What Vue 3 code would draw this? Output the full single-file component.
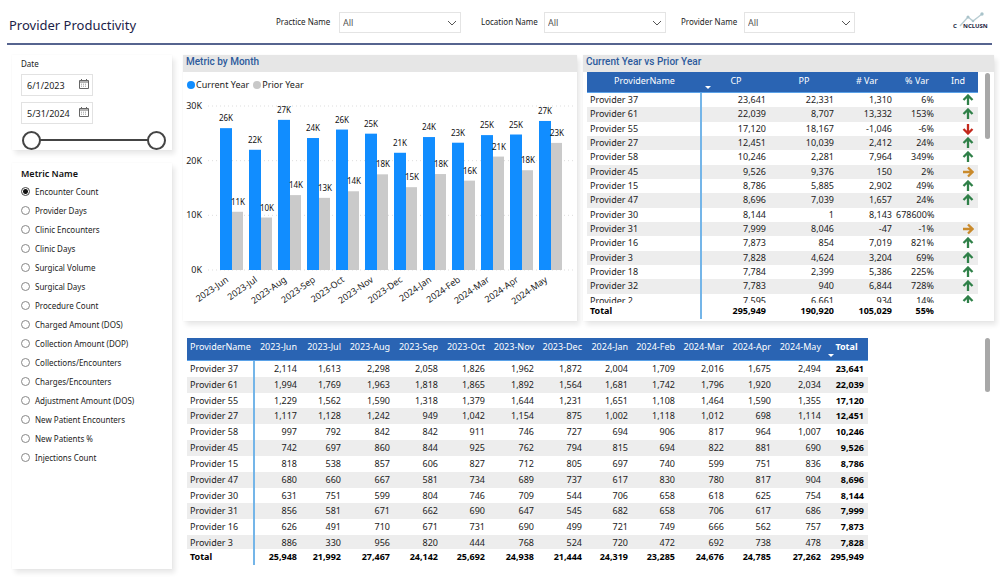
<script setup>
import { ref } from 'vue'

const filters = ['Practice Name', 'Location Name', 'Provider Name']
const startDate = ref('6/1/2023')
const endDate = ref('5/31/2024')
const rangeStart = ref(0)
const rangeEnd = ref(100)

const metrics = [
  'Encounter Count', 'Provider Days', 'Clinic Encounters', 'Clinic Days', 'Surgical Volume',
  'Surgical Days', 'Procedure Count', 'Charged Amount (DOS)', 'Collection Amount (DOP)',
  'Collections/Encounters', 'Charges/Encounters', 'Adjustment Amount (DOS)',
  'New Patient Encounters', 'New Patients %', 'Injections Count'
]
const metric = ref('Encounter Count')

const months = [
  '2023-Jun', '2023-Jul', '2023-Aug', '2023-Sep', '2023-Oct', '2023-Nov',
  '2023-Dec', '2024-Jan', '2024-Feb', '2024-Mar', '2024-Apr', '2024-May'
]
const current = [25948, 21992, 27467, 24142, 25692, 24938, 21444, 24319, 23285, 24676, 24785, 27262]
const prior = [10650, 9600, 13700, 13200, 14400, 17500, 15150, 17550, 16350, 20750, 18250, 23250]
const priorLabels = ['11K', '10K', '14K', '13K', '14K', '18K', '15K', '18K', '16K', '21K', '18K', '23K']

const base = 175
const scale = v => (v * 164) / 30000
const bars = months.map((m, i) => ({
  month: m,
  x: 37 + i * 29,
  cur: scale(current[i]),
  pri: scale(prior[i]),
  curLabel: Math.round(current[i] / 1000) + 'K',
  priLabel: priorLabels[i]
}))
const ticks = [30, 20, 10, 0].map(t => ({ label: t + 'K', y: base - scale(t * 1000) }))

const arrows = {
  up: 'M6 11V2M1.5 6L6 1.5L10.5 6',
  down: 'M6 1V10M1.5 6L6 10.5L10.5 6',
  right: 'M1 6H10M6 1.5L10.5 6L6 10.5'
}
const compare = [
  ['Provider 37', '23,641', '22,331', '1,310', '6%', 'up'],
  ['Provider 61', '22,039', '8,707', '13,332', '153%', 'up'],
  ['Provider 55', '17,120', '18,167', '-1,046', '-6%', 'down'],
  ['Provider 27', '12,451', '10,039', '2,412', '24%', 'up'],
  ['Provider 58', '10,246', '2,281', '7,964', '349%', 'up'],
  ['Provider 45', '9,526', '9,376', '150', '2%', 'right'],
  ['Provider 15', '8,786', '5,885', '2,902', '49%', 'up'],
  ['Provider 47', '8,696', '7,039', '1,657', '24%', 'up'],
  ['Provider 30', '8,144', '1', '8,143', '678600%', ''],
  ['Provider 31', '7,999', '8,046', '-47', '-1%', 'right'],
  ['Provider 16', '7,873', '854', '7,019', '821%', 'up'],
  ['Provider 3', '7,828', '4,624', '3,204', '69%', 'up'],
  ['Provider 18', '7,784', '2,399', '5,386', '225%', 'up'],
  ['Provider 32', '7,783', '940', '6,844', '728%', 'up'],
  ['Provider 2', '7,595', '6,661', '934', '14%', 'up']
]

const monthly = [
  ['Provider 37', 2114, 1613, 2298, 2058, 1826, 1962, 1872, 2004, 1709, 2016, 1675, 2494, 23641],
  ['Provider 61', 1994, 1769, 1963, 1818, 1865, 1892, 1564, 1681, 1742, 1796, 1920, 2034, 22039],
  ['Provider 55', 1229, 1562, 1590, 1318, 1379, 1644, 1231, 1651, 1108, 1464, 1590, 1355, 17120],
  ['Provider 27', 1117, 1128, 1242, 949, 1042, 1154, 875, 1002, 1118, 1012, 698, 1114, 12451],
  ['Provider 58', 997, 792, 842, 842, 911, 746, 727, 694, 906, 817, 964, 1007, 10246],
  ['Provider 45', 742, 697, 860, 844, 925, 762, 794, 815, 694, 822, 881, 690, 9526],
  ['Provider 15', 818, 538, 857, 606, 827, 712, 805, 697, 740, 599, 751, 836, 8786],
  ['Provider 47', 680, 660, 667, 581, 734, 689, 737, 617, 830, 780, 817, 904, 8696],
  ['Provider 30', 631, 751, 599, 804, 746, 709, 544, 706, 658, 618, 625, 754, 8144],
  ['Provider 31', 856, 581, 671, 662, 690, 647, 545, 682, 658, 706, 617, 686, 7999],
  ['Provider 16', 626, 491, 710, 671, 731, 690, 499, 721, 749, 666, 562, 757, 7873],
  ['Provider 3', 886, 330, 956, 820, 444, 768, 524, 720, 472, 692, 738, 478, 7828]
]
const fmt = n => n.toLocaleString('en-US')
const monthWidths = [46, 44, 49, 48, 47, 49, 48, 46, 47, 49, 47, 50]
</script>

<template>
  <div class="page">
    <header class="top">
      <h1>Provider Productivity</h1>
      <div class="filters">
        <div v-for="(f, i) in filters" :key="f" class="field">
          <label :for="'filter' + i">{{ f }}</label>
          <div class="drop">
            <select :id="'filter' + i"><option>All</option></select>
            <svg viewBox="0 0 10 6" aria-hidden="true"><path d="M1 1L5 5L9 1" /></svg>
          </div>
        </div>
      </div>
      <svg class="logo" viewBox="0 0 38 18" role="img" aria-label="Conclusn">
        <polyline points="8,14 16,5 21,9 30,2" />
        <circle cx="16" cy="5" r="1.5" /><circle cx="21" cy="9" r="1.3" /><circle cx="30" cy="2" r="1.7" />
        <text x="1" y="16">C</text>
        <text x="11" y="16">NCLUSN</text>
      </svg>
    </header>

    <main class="body">
      <aside class="side">
        <section class="card dates">
          <div class="cap">Date</div>
          <div class="date">
            <input v-model="startDate" type="text" aria-label="Start date">
            <svg viewBox="0 0 10 10" aria-hidden="true"><path d="M.5 1.5h9v8h-9zM.5 3h9M2.5 0v2M7.5 0v2" /><path class="dots" d="M2 5.2h6M2 7.2h6" /></svg>
          </div>
          <div class="date">
            <input v-model="endDate" type="text" aria-label="End date">
            <svg viewBox="0 0 10 10" aria-hidden="true"><path d="M.5 1.5h9v8h-9zM.5 3h9M2.5 0v2M7.5 0v2" /><path class="dots" d="M2 5.2h6M2 7.2h6" /></svg>
          </div>
          <div class="range">
            <input v-model="rangeStart" type="range" min="0" max="100" aria-label="Range start">
            <input v-model="rangeEnd" type="range" min="0" max="100" aria-label="Range end">
          </div>
        </section>

        <section class="card metrics">
          <h2>Metric Name</h2>
          <label v-for="m in metrics" :key="m">
            <input v-model="metric" type="radio" name="metric" :value="m">{{ m }}
          </label>
        </section>
      </aside>

      <div class="content">
        <div class="upper">
          <section class="card chart">
            <h2 class="bar">Metric by Month</h2>
            <div class="legend">
              <i class="dot blue"></i>Current Year<i class="dot gray"></i>Prior Year
            </div>
            <svg class="plot" viewBox="0 0 394 226" role="img" aria-label="Metric by Month">
              <g v-for="t in ticks" :key="t.label">
                <line class="grid" x1="25" x2="392" :y1="t.y" :y2="t.y" />
                <text class="tick" x="19" :y="t.y + 3">{{ t.label }}</text>
              </g>
              <g v-for="b in bars" :key="b.month">
                <rect class="cur" :x="b.x" :y="base - b.cur" width="12" :height="b.cur" />
                <rect class="pri" :x="b.x + 12" :y="base - b.pri" width="11" :height="b.pri" />
                <text class="axis" :transform="`translate(${b.x + 9} 186) rotate(-35)`">{{ b.month }}</text>
              </g>
              <g v-for="b in bars" :key="b.month">
                <text class="val" :x="b.x + 6" :y="base - b.cur - 7">{{ b.curLabel }}</text>
                <text class="val" :x="b.x + 18" :y="base - b.pri - 7">{{ b.priLabel }}</text>
              </g>
            </svg>
          </section>

          <section class="card versus">
            <h2 class="bar">Current Year vs Prior Year</h2>
            <div class="versus-body">
              <div class="scroll s1">
                <table class="t1">
                  <colgroup><col class="c1"><col class="c2"><col class="c2"><col class="c3"><col class="c4"><col class="c5"></colgroup>
                  <thead>
                    <tr><th>ProviderName</th><th class="sorted">CP</th><th>PP</th><th># Var</th><th>% Var</th><th>Ind</th></tr>
                  </thead>
                  <tbody>
                    <tr v-for="r in compare" :key="r[0]">
                      <td v-for="c in 5" :key="c">{{ r[c - 1] }}</td>
                      <td><svg v-if="r[5]" :class="['ind', r[5]]" viewBox="0 0 12 12" role="img" :aria-label="r[5]"><path :d="arrows[r[5]]" /></svg></td>
                    </tr>
                  </tbody>
                  <tfoot>
                    <tr><td>Total</td><td>295,949</td><td>190,920</td><td>105,029</td><td>55%</td><td></td></tr>
                  </tfoot>
                </table>
              </div>
              <div class="thumb long"></div>
            </div>
          </section>
        </div>

        <section class="lower">
          <div class="scroll s2">
            <table class="t2">
              <colgroup>
                <col style="width: 68px"><col v-for="(w, i) in monthWidths" :key="i" :style="{ width: w + 'px' }"><col style="width: 43px">
              </colgroup>
              <thead>
                <tr><th>ProviderName</th><th v-for="m in months" :key="m">{{ m }}</th><th class="sorted">Total</th></tr>
              </thead>
              <tbody>
                <tr v-for="r in monthly" :key="r[0]">
                  <td>{{ r[0] }}</td>
                  <td v-for="c in 13" :key="c">{{ fmt(r[c]) }}</td>
                </tr>
              </tbody>
              <tfoot>
                <tr><td>Total</td><td v-for="(v, i) in current" :key="i">{{ fmt(v) }}</td><td>295,949</td></tr>
              </tfoot>
            </table>
          </div>
          <div class="thumb"></div>
        </section>
      </div>
    </main>
  </div>
</template>

<style>
body { background: #fff; }
</style>

<style scoped>
.page {
  font-family: "Noto Sans", "Open Sans", sans-serif;
  font-size: 9px;
  line-height: 14px;
  color: #1c1c1c;
  background: #fff;
}
.page *, .page *::before, .page *::after { box-sizing: border-box; }
h1, h2 { margin: 0; font-weight: 400; }
input, select { font: inherit; color: inherit; margin: 0; }

.top {
  display: flex;
  height: 45px;
  margin: 0 8px 0 7px;
  padding-left: 2px;
  border-bottom: 2px solid #56648f;
}
h1 { width: 267px; padding-top: 15px; font-size: 13px; line-height: 20px; color: #1b2248; }
.filters { display: flex; padding-top: 12px; }
.field { display: flex; height: 21px; }
.field + .field { margin-left: 20px; }
.field:last-child { margin-left: 15px; }
.field label { width: 63px; line-height: 20px; font-size: 8px; white-space: nowrap; }
.drop { position: relative; width: 122px; }
.field:last-child .drop { width: 111px; }
select {
  width: 100%;
  height: 21px;
  padding: 1px 3px 0;
  border: 1px solid #e4e4e4;
  border-radius: 0;
  background: #fff;
  color: #555;
  appearance: none;
}
.drop svg { position: absolute; right: 4px; top: 8px; width: 10px; height: 6px; pointer-events: none; }
.drop path { fill: none; stroke: #555; }
.logo { width: 38px; height: 18px; margin: 12px 2px 0 auto; }
.logo polyline { fill: none; stroke: #b9cdd3; stroke-width: 1.4; }
.logo circle { fill: #a9c3ca; }
.logo text { font-size: 6px; font-weight: 700; fill: #1b2440; }

.body { display: flex; gap: 11px; padding: 10px 6px 10px 12px; }
.side { flex: none; width: 160px; display: flex; flex-direction: column; gap: 13px; }
.card { background: #fff; box-shadow: 3px 4px 5px rgba(0, 0, 0, 0.09), 0 0 2px rgba(0, 0, 0, 0.04); }
.dates { height: 95px; padding: 1px 6px 0 9px; overflow: hidden; }
.cap { font-size: 8px; line-height: 16px; margin-bottom: 2px; }
.date {
  display: flex;
  align-items: center;
  width: 72px;
  height: 22px;
  margin-bottom: 6px;
  padding: 0 3px 0 5px;
  border: 1px solid #e2e2e2;
}
.date input { flex: 1; min-width: 0; padding: 1px 0 0; border: 0; background: none; }
.date svg { flex: none; width: 10px; height: 10px; margin-bottom: 2px; }
.date path { fill: none; stroke: #666; }
.date .dots { stroke: #999; stroke-dasharray: 1 1; }
.range { position: relative; height: 20px; margin: 7px 0 0 1px; }
.range::before { content: ""; position: absolute; left: 10px; right: 10px; top: 8px; height: 2px; background: #444; }
.range input {
  position: absolute;
  left: 0;
  top: 0;
  width: 100%;
  height: 19px;
  appearance: none;
  background: none;
  pointer-events: none;
}
.range input::-webkit-slider-thumb {
  appearance: none;
  width: 19px;
  height: 19px;
  border: 2px solid #444;
  border-radius: 50%;
  background: #fff;
  pointer-events: auto;
}
.metrics { flex: 1; padding: 2px 9px; }
.metrics h2 { font-size: 9px; font-weight: 600; line-height: 18px; margin-bottom: -1px; color: #111; }
.metrics label { display: flex; align-items: center; gap: 5px; height: 19px; font-size: 8px; white-space: nowrap; }
.metrics input {
  appearance: none;
  width: 9px;
  height: 9px;
  border: 1px solid #888;
  border-radius: 50%;
  background: #fff;
}
.metrics input:checked { border-color: #444; background: radial-gradient(circle, #111 0 2px, #fff 3px); }

.content { flex: 1; min-width: 0; }
.upper { display: grid; grid-template-columns: minmax(0, 394fr) minmax(0, 411fr); gap: 6px; }
.bar {
  height: 17px;
  padding-left: 3px;
  background: #e6e6e6;
  color: #2c5a9c;
  font-family: Roboto, sans-serif;
  font-size: 10px;
  font-weight: 500;
  line-height: 14px;
}
.legend { display: flex; align-items: center; height: 23px; padding: 3px 0 0 4px; }
.dot { width: 8px; height: 8px; border-radius: 50%; margin-right: 1px; }
.blue { background: #118dff; }
.gray { background: #c8c8c8; margin-left: 4px; }
.plot { display: block; width: 100%; }
.grid { stroke: #ddd; stroke-dasharray: 1 3; }
.tick, .axis { font-size: 9px; text-anchor: end; fill: #1c1c1c; }
.val { font-size: 8px; text-anchor: middle; fill: #111; }
.cur { fill: #118dff; }
.pri { fill: #cacaca; }

.versus-body { display: flex; gap: 7px; padding: 0 4px; }
.scroll { flex: 1; min-width: 0; overflow: auto; scrollbar-width: none; }
.s1 { height: 247px; }
.thumb { flex: none; width: 5px; height: 54px; border-radius: 3px; background: #a8a8a8; }
.long { height: 66px; margin-top: 1px; }

table { width: 100%; table-layout: fixed; border-collapse: separate; border-spacing: 0; }
th, td { padding: 0 4px 0 0; text-align: right; white-space: nowrap; }
td:first-child { padding-left: 3px; text-align: left; border-right: 2px solid #74b5e8; }
thead th {
  position: sticky;
  top: 0;
  z-index: 1;
  vertical-align: top;
  background: #2a64b3;
  border-bottom: 1px solid #5ba2e8;
  color: #fff;
  font-weight: 400;
}
tbody tr:nth-child(even) td { background: #ededed; }
tfoot td { position: sticky; bottom: 0; height: 16px; background: #fff; color: #000; font-weight: 700; }
.sorted::after {
  content: "";
  position: absolute;
  left: 3px;
  bottom: 3px;
  border: 3px solid transparent;
  border-top-color: #fff;
  border-bottom: 0;
}

.t1 { height: 252px; }
.t1 th { height: 21px; padding: 2px 0 0; text-align: center; }
.c1 { width: 115px; }
.c2 { width: 68px; }
.c3 { width: 58px; }
.c4 { width: 42px; }
.c5 { width: 40px; }
.ind { display: block; width: 12px; height: 12px; margin-left: auto; fill: none; stroke-width: 2.3; }
.up { stroke: #2f8048; }
.down { stroke: #c3291d; }
.right { stroke: #c98a2b; }

.lower { display: flex; gap: 117px; margin-top: 17px; padding: 0 4px 4px; }
.s2 { height: 227px; }
.t2 { height: 229px; }
.t2 th { height: 23px; padding-top: 2px; }
.t2 th:first-child { padding-left: 3px; text-align: left; }
.t2 th:last-child { padding: 2px 0 0; text-align: center; font-weight: 700; }
.t2 td:last-child { font-weight: 700; color: #000; }
</style>
